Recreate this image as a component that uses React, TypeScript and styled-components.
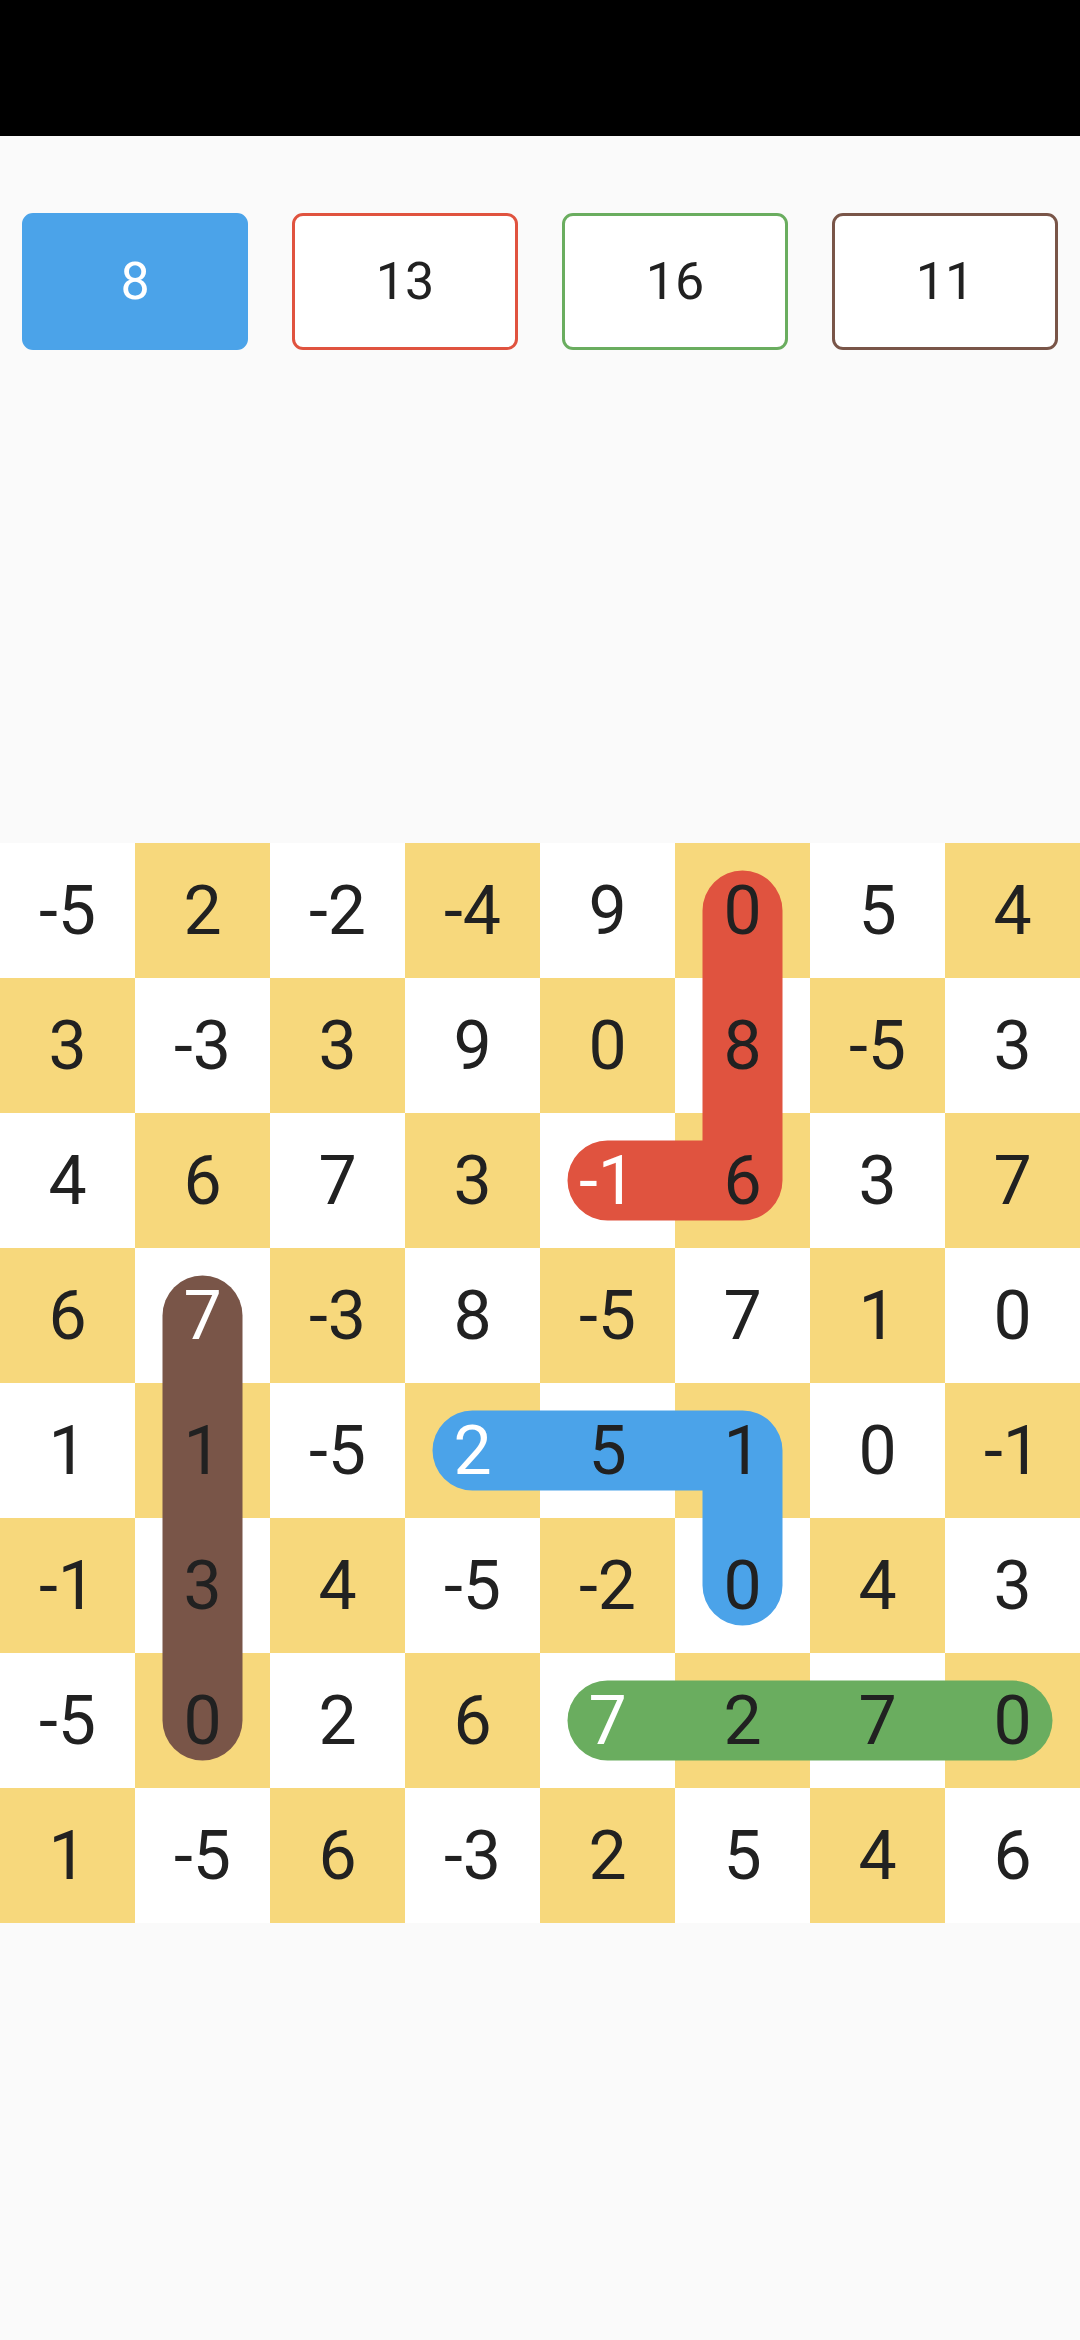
import React from 'react';
import styled, { createGlobalStyle } from 'styled-components';

const GlobalStyle = createGlobalStyle`
  html, body {
    margin: 0;
    padding: 0;
    background: #fafafa;
    font-family: Roboto, "Liberation Sans", sans-serif;
  }
`;

const CELL = 135;

const board: number[][] = [
  [-5, 2, -2, -4, 9, 0, 5, 4],
  [3, -3, 3, 9, 0, 8, -5, 3],
  [4, 6, 7, 3, -1, 6, 3, 7],
  [6, 7, -3, 8, -5, 7, 1, 0],
  [1, 1, -5, 2, 5, 1, 0, -1],
  [-1, 3, 4, -5, -2, 0, 4, 3],
  [-5, 0, 2, 6, 7, 2, 7, 0],
  [1, -5, 6, -3, 2, 5, 4, 6],
];

interface Path {
  color: string;
  sum: number;
  filled?: boolean;
  cells: [number, number][];
}

const paths: Path[] = [
  { color: '#4ba3e9', sum: 8, filled: true, cells: [[4, 3], [4, 4], [4, 5], [5, 5]] },
  { color: '#e0533f', sum: 13, cells: [[2, 4], [2, 5], [1, 5], [0, 5]] },
  { color: '#6aad5f', sum: 16, cells: [[6, 4], [6, 5], [6, 6], [6, 7]] },
  { color: '#795548', sum: 11, cells: [[3, 1], [4, 1], [5, 1], [6, 1]] },
];

const startCells = new Set(paths.map((p) => `${p.cells[0][0]}-${p.cells[0][1]}`));

const Screen = styled.div`
  min-height: 2340px;
  background: #fafafa;
`;

const StatusBar = styled.div`
  height: 136px;
  background: #000;
`;

const ScoreRow = styled.div`
  display: grid;
  grid-template-columns: repeat(4, 1fr);
  padding-top: 77px;
  height: 137px;
`;

const ScoreBox = styled.div<{ $color: string; $filled?: boolean }>`
  margin: 0 22px;
  box-sizing: border-box;
  height: 137px;
  border-radius: 11px;
  border: 3px solid ${(p) => p.$color};
  background: ${(p) => (p.$filled ? p.$color : '#ffffff')};
  color: ${(p) => (p.$filled ? '#ffffff' : '#212121')};
  display: flex;
  align-items: center;
  justify-content: center;
  font-size: 52px;
`;

const Board = styled.div`
  position: relative;
  margin-top: 493px;
  display: grid;
  grid-template-columns: repeat(8, ${CELL}px);
  grid-auto-rows: ${CELL}px;
`;

const Cell = styled.div<{ $yellow: boolean }>`
  background: ${(p) => (p.$yellow ? '#f7d87c' : '#ffffff')};
  display: flex;
  align-items: center;
  justify-content: center;
`;

const Value = styled.span<{ $start: boolean }>`
  position: relative;
  z-index: 2;
  font-size: 68px;
  color: ${(p) => (p.$start ? '#ffffff' : '#212121')};
`;

const Overlay = styled.svg`
  position: absolute;
  left: 0;
  top: 0;
  z-index: 1;
  pointer-events: none;
`;

const center = (v: number) => v * CELL + CELL / 2;

const App: React.FC = () => {
  return (
    <Screen>
      <GlobalStyle />
      <StatusBar />
      <ScoreRow>
        {paths.map((p) => (
          <ScoreBox key={p.color} $color={p.color} $filled={p.filled}>
            {p.sum}
          </ScoreBox>
        ))}
      </ScoreRow>
      <Board>
        {board.map((row, r) =>
          row.map((v, c) => (
            <Cell key={`${r}-${c}`} $yellow={(r + c) % 2 === 1}>
              <Value $start={startCells.has(`${r}-${c}`)}>{v}</Value>
            </Cell>
          )),
        )}
        <Overlay width={CELL * 8} height={CELL * 8}>
          {paths.map((p) => (
            <polyline
              key={p.color}
              points={p.cells.map(([r, c]) => `${center(c)},${center(r)}`).join(' ')}
              fill="none"
              stroke={p.color}
              strokeWidth={80}
              strokeLinecap="round"
              strokeLinejoin="round"
            />
          ))}
        </Overlay>
      </Board>
    </Screen>
  );
};

export default App;
